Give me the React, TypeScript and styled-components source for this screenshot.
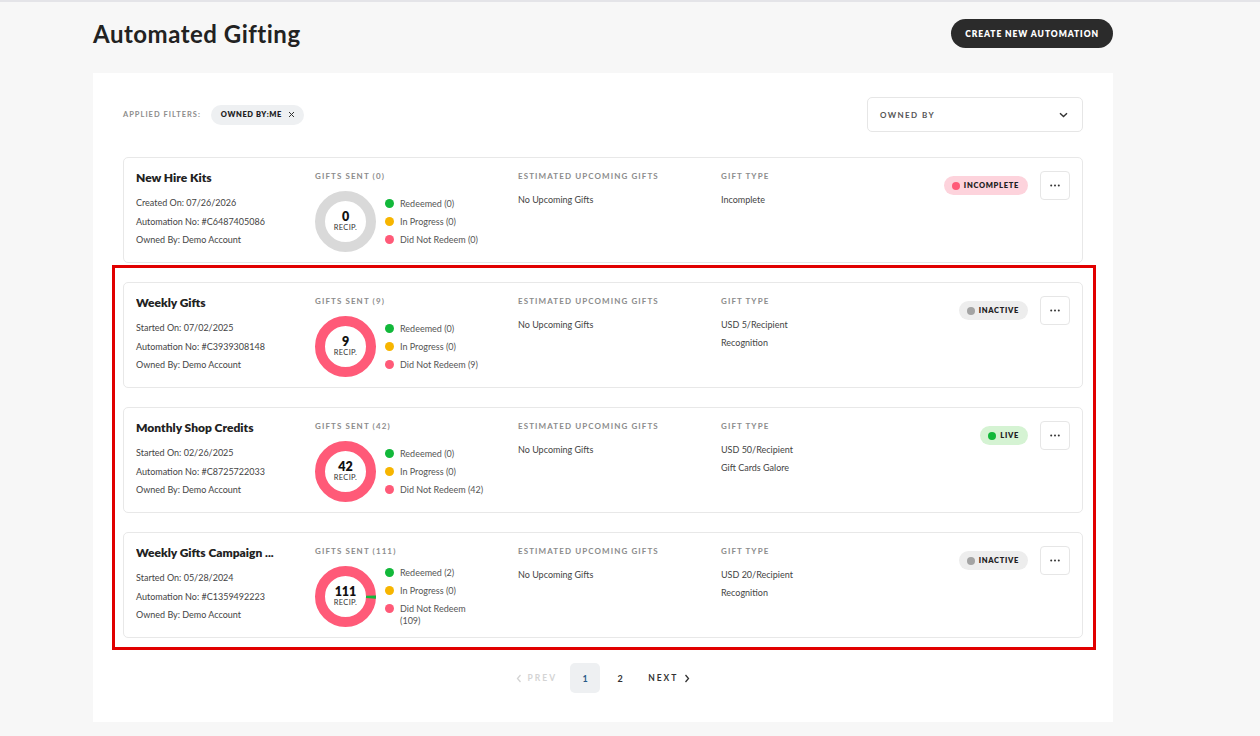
import React from "react";
import styled, { createGlobalStyle } from "styled-components";

const Global = createGlobalStyle`
  * { box-sizing: border-box; }
  html, body { margin: 0; padding: 0; }
  body {
    background: #f7f7f7;
    font-family: Lato, "Open Sans", Arial, sans-serif;
    color: #222;
    border-top: 2px solid #e4e4e8;
  }
`;

const Page = styled.div`
  padding: 17px 147px 14px 93px;
`;

const Header = styled.div`
  display: flex;
  align-items: center;
  justify-content: space-between;
  height: 29px;
`;

const Title = styled.h1`
  margin: 0;
  font-size: 24px;
  font-weight: 700;
  color: #222;
  letter-spacing: 0.5px;
`;

const PrimaryButton = styled.button`
  height: 29px;
  padding: 0 14px;
  border: none;
  border-radius: 15px;
  background: #2b2b2b;
  color: #fff;
  font-family: Lato, Arial, sans-serif;
  font-size: 8.5px;
  font-weight: 800;
  letter-spacing: 0.9px;
`;

const Panel = styled.div`
  margin-top: 25px;
  background: #fff;
  padding: 24px 30px 29px 30px;
`;

const FilterRow = styled.div`
  display: flex;
  align-items: center;
  justify-content: space-between;
  height: 35px;
`;

const FilterLeft = styled.div`
  display: flex;
  align-items: center;
  gap: 10px;
`;

const FilterLabel = styled.span`
  font-size: 7.5px;
  font-weight: 700;
  letter-spacing: 1px;
  color: #8c8c8c;
`;

const Chip = styled.span`
  display: inline-flex;
  align-items: center;
  gap: 6px;
  height: 20px;
  padding: 0 9px 0 10px;
  border-radius: 10px;
  background: #eef0f2;
  font-size: 7.5px;
  font-weight: 800;
  letter-spacing: 0.6px;
  color: #222;
`;

const Dropdown = styled.div`
  width: 216px;
  height: 35px;
  border: 1px solid #e6e6e6;
  border-radius: 5px;
  display: flex;
  align-items: center;
  justify-content: space-between;
  padding: 0 14px 0 12px;
  font-size: 8px;
  font-weight: 700;
  letter-spacing: 1.4px;
  color: #555;
`;

const CardList = styled.div`
  margin-top: 25px;
  display: flex;
  flex-direction: column;
  gap: 19px;
`;

const Highlight = styled.div`
  position: relative;
  display: flex;
  flex-direction: column;
  gap: 19px;
  &::after {
    content: "";
    position: absolute;
    top: -17px;
    left: -11px;
    right: -13px;
    bottom: -12px;
    border: 3px solid #e10000;
    pointer-events: none;
  }
`;

const Card = styled.div`
  display: grid;
  grid-template-columns: 179px 203px 203px 1fr auto;
  align-items: start;
  height: 106px;
  border: 1px solid #e8e8e8;
  border-radius: 5px;
  padding: 12px;
`;

const Col = styled.div`
  display: flex;
  flex-direction: column;
  min-width: 0;
`;

const CardName = styled.div`
  font-size: 12px;
  font-weight: 800;
  line-height: 16px;
  color: #222;
  white-space: nowrap;
  overflow: hidden;
  text-overflow: ellipsis;
  max-width: 150px;
  margin-bottom: 8px;
`;

const Meta = styled.div`
  font-size: 9px;
  line-height: 18.5px;
  color: #444;
`;

const ColLabel = styled.div`
  font-size: 8px;
  font-weight: 700;
  letter-spacing: 1.1px;
  line-height: 12px;
  color: #8c8c8c;
`;

const TextList = styled.div`
  margin-top: 9px;
  display: flex;
  flex-direction: column;
`;

const ColText = styled.div`
  font-size: 9px;
  line-height: 18px;
  color: #444;
`;

const GiftsBody = styled.div`
  display: flex;
  align-items: center;
  gap: 9px;
  margin-top: 9px;
`;

const DonutWrap = styled.div`
  position: relative;
  width: 61px;
  height: 61px;
  flex: none;
`;

const DonutCenter = styled.div`
  position: absolute;
  inset: 0;
  display: flex;
  flex-direction: column;
  align-items: center;
  justify-content: center;
`;

const DonutNum = styled.div`
  font-size: 12.5px;
  font-weight: 800;
  line-height: 13px;
  color: #111;
`;

const DonutSub = styled.div`
  font-size: 7.5px;
  line-height: 10px;
  letter-spacing: 0.3px;
  color: #333;
`;

const Legend = styled.div`
  display: flex;
  flex-direction: column;
  gap: 6px;
`;

const LegendItem = styled.div`
  display: flex;
  align-items: flex-start;
  gap: 6px;
  font-size: 9px;
  line-height: 12px;
  color: #555;
`;

const LegendText = styled.span<{ $narrow?: boolean }>`
  display: block;
  max-width: ${(p) => (p.$narrow ? "72px" : "none")};
`;

const Dot = styled.span<{ $c: string }>`
  width: 9px;
  height: 9px;
  border-radius: 50%;
  background: ${(p) => p.$c};
  flex: none;
  margin-top: 1.5px;
`;

const RightSide = styled.div`
  display: flex;
  align-items: flex-start;
  gap: 12px;
  padding-top: 1px;
`;

const Badge = styled.span<{ $bg: string }>`
  margin-top: 5px;
  display: inline-flex;
  align-items: center;
  gap: 4px;
  height: 19px;
  padding: 0 9px 0 8px;
  border-radius: 10px;
  background: ${(p) => p.$bg};
  font-size: 7.5px;
  font-weight: 800;
  letter-spacing: 0.7px;
  color: #222;
`;

const BadgeDot = styled.span<{ $c: string }>`
  width: 8px;
  height: 8px;
  border-radius: 50%;
  background: ${(p) => p.$c};
`;

const MoreButton = styled.button`
  width: 30px;
  height: 29px;
  border: 1px solid #e6e6e6;
  border-radius: 4px;
  background: #fff;
  display: flex;
  align-items: center;
  justify-content: center;
  padding: 0;
`;

const Pagination = styled.div`
  margin-top: 25px;
  display: flex;
  justify-content: center;
  align-items: center;
  gap: 13px;
`;

const PageNums = styled.div`
  display: flex;
  gap: 5px;
`;

const PageNav = styled.span<{ $disabled?: boolean }>`
  display: inline-flex;
  align-items: center;
  gap: 6px;
  font-size: 8.5px;
  font-weight: 700;
  letter-spacing: 2px;
  color: ${(p) => (p.$disabled ? "#d4d4d4" : "#333")};
`;

const PageNum = styled.span<{ $active?: boolean }>`
  width: 30px;
  height: 30px;
  border-radius: 5px;
  display: inline-flex;
  align-items: center;
  justify-content: center;
  font-size: 9px;
  font-weight: 700;
  background: ${(p) => (p.$active ? "#eef0f2" : "transparent")};
  color: ${(p) => (p.$active ? "#2a5a88" : "#333")};
`;

const COLORS = {
  green: "#12b83a",
  yellow: "#f7b500",
  pink: "#ff5a78",
  gray: "#d9d9d9",
};

function Donut({ total, redeemed }: { total: number; redeemed: number }) {
  const r = 25.5;
  const c = 2 * Math.PI * r;
  const greenLen = total > 0 ? (redeemed / total) * c : 0;
  return (
    <DonutWrap>
      <svg width="61" height="61" viewBox="0 0 61 61">
        <circle cx="30.5" cy="30.5" r={r} fill="none" stroke={total > 0 ? COLORS.pink : COLORS.gray} strokeWidth="10" />
        {greenLen > 0 && (
          <circle
            cx="30.5"
            cy="30.5"
            r={r}
            fill="none"
            stroke={COLORS.green}
            strokeWidth="10"
            strokeDasharray={`${greenLen} ${c}`}
            transform="rotate(-2 30.5 30.5)"
          />
        )}
      </svg>
      <DonutCenter>
        <DonutNum>{total}</DonutNum>
        <DonutSub>RECIP.</DonutSub>
      </DonutCenter>
    </DonutWrap>
  );
}

type Status = "INCOMPLETE" | "INACTIVE" | "LIVE";
const STATUS: Record<Status, { bg: string; dot: string }> = {
  INCOMPLETE: { bg: "#fdd3dc", dot: "#ff5a78" },
  INACTIVE: { bg: "#ededed", dot: "#a3a3a3" },
  LIVE: { bg: "#d5f3d3", dot: "#12b83a" },
};

type Auto = {
  name: string;
  dateLabel: string;
  date: string;
  no: string;
  total: number;
  redeemed: number;
  notRedeemed: number;
  giftType: string[];
  status: Status;
};

const data: Auto[] = [
  { name: "New Hire Kits", dateLabel: "Created On", date: "07/26/2026", no: "#C6487405086", total: 0, redeemed: 0, notRedeemed: 0, giftType: ["Incomplete"], status: "INCOMPLETE" },
  { name: "Weekly Gifts", dateLabel: "Started On", date: "07/02/2025", no: "#C3939308148", total: 9, redeemed: 0, notRedeemed: 9, giftType: ["USD 5/Recipient", "Recognition"], status: "INACTIVE" },
  { name: "Monthly Shop Credits", dateLabel: "Started On", date: "02/26/2025", no: "#C8725722033", total: 42, redeemed: 0, notRedeemed: 42, giftType: ["USD 50/Recipient", "Gift Cards Galore"], status: "LIVE" },
  { name: "Weekly Gifts Campaign ...", dateLabel: "Started On", date: "05/28/2024", no: "#C1359492223", total: 111, redeemed: 2, notRedeemed: 109, giftType: ["USD 20/Recipient", "Recognition"], status: "INACTIVE" },
];

function AutomationCard({ a }: { a: Auto }) {
  const s = STATUS[a.status];
  return (
    <Card>
      <Col>
        <CardName>{a.name}</CardName>
        <Meta>{a.dateLabel}: {a.date}</Meta>
        <Meta>Automation No: {a.no}</Meta>
        <Meta>Owned By: Demo Account</Meta>
      </Col>
      <Col>
        <ColLabel>GIFTS SENT ({a.total})</ColLabel>
        <GiftsBody>
          <Donut total={a.total} redeemed={a.redeemed} />
          <Legend>
            <LegendItem><Dot $c={COLORS.green} />Redeemed ({a.redeemed})</LegendItem>
            <LegendItem><Dot $c={COLORS.yellow} />In Progress (0)</LegendItem>
            <LegendItem>
              <Dot $c={COLORS.pink} />
              <LegendText $narrow={a.notRedeemed > 99}>Did Not Redeem ({a.notRedeemed})</LegendText>
            </LegendItem>
          </Legend>
        </GiftsBody>
      </Col>
      <Col>
        <ColLabel>ESTIMATED UPCOMING GIFTS</ColLabel>
        <TextList>
          <ColText>No Upcoming Gifts</ColText>
        </TextList>
      </Col>
      <Col>
        <ColLabel>GIFT TYPE</ColLabel>
        <TextList>
          {a.giftType.map((g) => (
            <ColText key={g}>{g}</ColText>
          ))}
        </TextList>
      </Col>
      <RightSide>
        <Badge $bg={s.bg}>
          <BadgeDot $c={s.dot} />
          {a.status}
        </Badge>
        <MoreButton aria-label="more">
          <svg width="10" height="3" viewBox="0 0 10 3">
            <circle cx="1.2" cy="1.5" r="1" fill="#333" />
            <circle cx="5" cy="1.5" r="1" fill="#333" />
            <circle cx="8.8" cy="1.5" r="1" fill="#333" />
          </svg>
        </MoreButton>
      </RightSide>
    </Card>
  );
}

export default function App() {
  return (
    <>
      <Global />
      <Page>
        <Header>
          <Title>Automated Gifting</Title>
          <PrimaryButton>CREATE NEW AUTOMATION</PrimaryButton>
        </Header>
        <Panel>
          <FilterRow>
            <FilterLeft>
              <FilterLabel>APPLIED FILTERS:</FilterLabel>
              <Chip>
                OWNED BY:ME
                <svg width="7" height="7" viewBox="0 0 7 7">
                  <path d="M1 1L6 6M6 1L1 6" stroke="#333" strokeWidth="1" />
                </svg>
              </Chip>
            </FilterLeft>
            <Dropdown>
              OWNED BY
              <svg width="9" height="6" viewBox="0 0 9 6">
                <path d="M1 1.2L4.5 4.6L8 1.2" stroke="#333" strokeWidth="1.4" fill="none" />
              </svg>
            </Dropdown>
          </FilterRow>
          <CardList>
            <AutomationCard a={data[0]} />
            <Highlight>
              {data.slice(1).map((a) => (
                <AutomationCard key={a.no} a={a} />
              ))}
            </Highlight>
          </CardList>
          <Pagination>
            <PageNav $disabled>
              <svg width="6" height="9" viewBox="0 0 6 9">
                <path d="M4.5 1L1.5 4.5L4.5 8" stroke="#d4d4d4" strokeWidth="1.3" fill="none" />
              </svg>
              PREV
            </PageNav>
            <PageNums>
              <PageNum $active>1</PageNum>
              <PageNum>2</PageNum>
            </PageNums>
            <PageNav>
              NEXT
              <svg width="6" height="9" viewBox="0 0 6 9">
                <path d="M1.5 1L4.5 4.5L1.5 8" stroke="#333" strokeWidth="1.3" fill="none" />
              </svg>
            </PageNav>
          </Pagination>
        </Panel>
      </Page>
    </>
  );
}
